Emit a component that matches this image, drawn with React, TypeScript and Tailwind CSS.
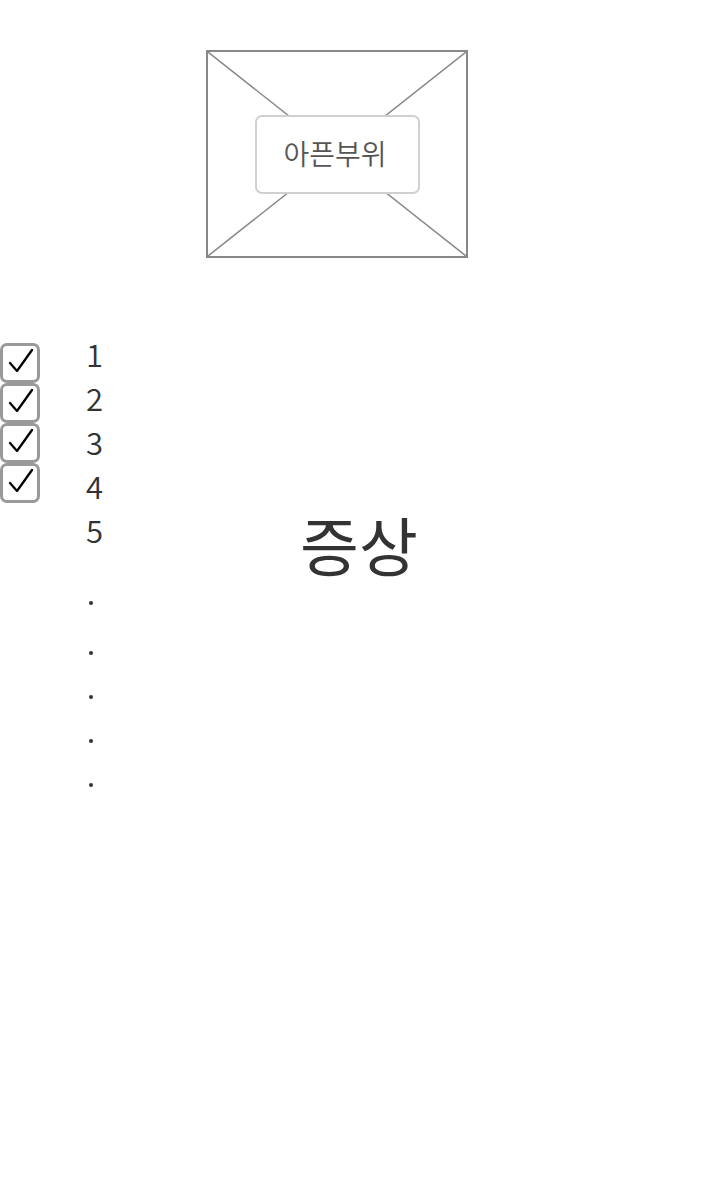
import React from "react";

const font = { fontFamily: '"Noto Sans CJK KR", "Noto Sans", sans-serif' };

function Check() {
  return (
    <div className="w-[40px] h-[40px] box-border border-[3px] border-[#999] rounded-[7px] bg-white">
      <svg width="34" height="34" viewBox="0 0 34 34" className="block">
        <polyline points="7,17 14,25 29,4" fill="none" stroke="#000" strokeWidth="2.3" strokeLinejoin="round" strokeLinecap="round" />
      </svg>
    </div>
  );
}

function Dot({ mt }: { mt: string }) {
  return <div className={`w-[4px] h-[4px] rounded-full bg-[#333] ml-[3px] ${mt}`} />;
}

export default function App() {
  return (
    <div className="w-[720px] h-[1200px] bg-white pt-[50px]" style={font}>
      <div className="ml-[206px] w-[262px] h-[208px] box-border border-2 border-[#888] relative flex items-center justify-center">
        <svg className="absolute inset-0 w-full h-full" viewBox="0 0 258 204" preserveAspectRatio="none">
          <line x1="0" y1="0" x2="258" y2="204" stroke="#888" strokeWidth="1.5" />
          <line x1="258" y1="0" x2="0" y2="204" stroke="#888" strokeWidth="1.5" />
        </svg>
        <div className="relative w-[165px] h-[79px] box-border border-2 border-[#d0d0d0] rounded-[7px] bg-white flex items-center justify-center pb-[3px] pr-[4px] text-[28px] font-[350] text-[#555] leading-none">
          아픈부위
        </div>
      </div>

      <div className="mt-[74px] flex">
        <div className="w-[40px] pt-[11px] flex flex-col">
          <Check />
          <Check />
          <Check />
          <Check />
        </div>
        <div className="ml-[46px] w-[214px] flex flex-col">
          {["1", "2", "3", "4", "5"].map((n) => (
            <div key={n} className="h-[44px] leading-[44px] text-[31px] font-[350] text-[#333]">
              {n}
            </div>
          ))}
          <Dot mt="mt-[49px]" />
          <Dot mt="mt-[46px]" />
          <Dot mt="mt-[40px]" />
          <Dot mt="mt-[40px]" />
          <Dot mt="mt-[40px]" />
        </div>
        <div className="mt-[179px] text-[64px] leading-none text-[#333]">증상</div>
      </div>
    </div>
  );
}
